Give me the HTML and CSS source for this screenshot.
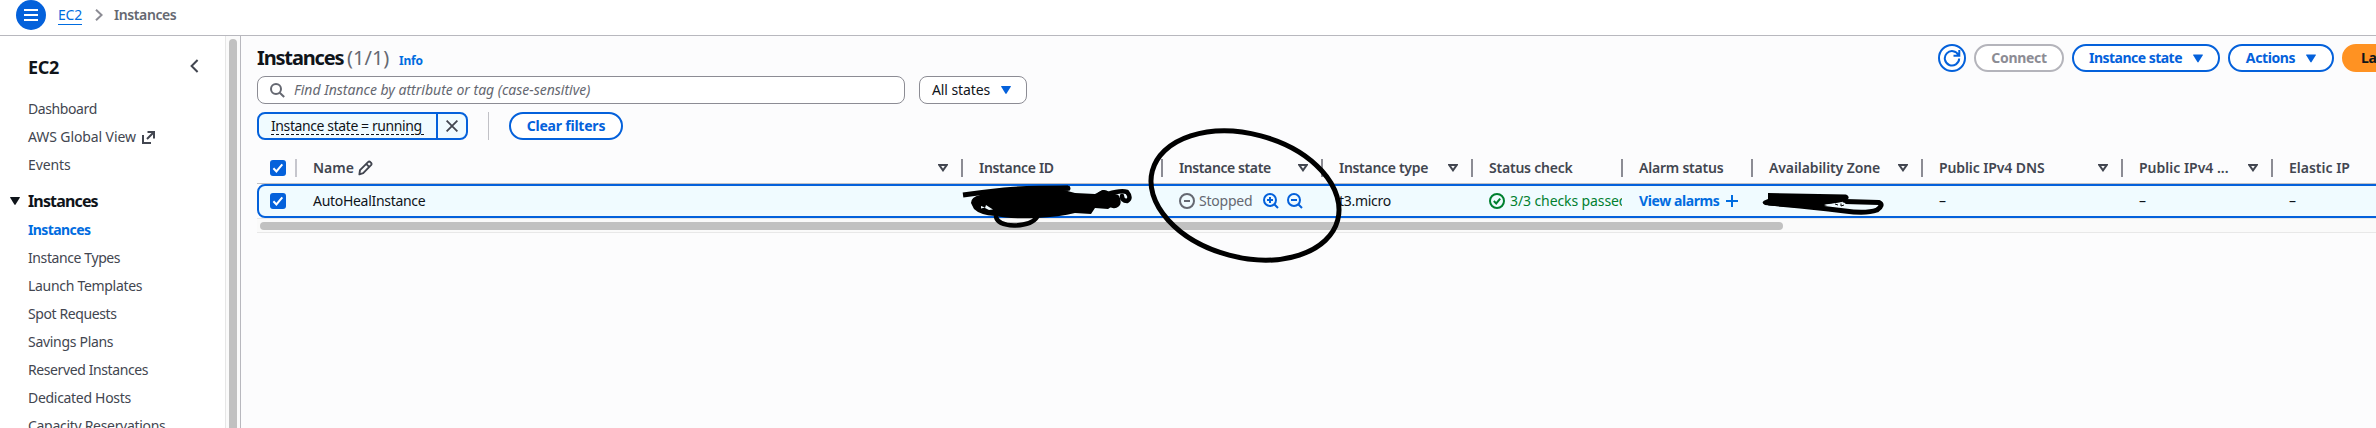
FILE: index.html
```html
<!DOCTYPE html>
<html lang="en">
<head>
<meta charset="utf-8">
<title>Instances | EC2</title>
<link rel="stylesheet" href="styles.css">
</head>
<body>
<svg class="defs" width="0" height="0" aria-hidden="true">
  <symbol id="filter" viewBox="0 0 10 8"><path d="M1.3 1h7.4L5 6.3z" fill="none" stroke="currentColor" stroke-width="2"/></symbol>
  <symbol id="caret" viewBox="0 0 10 8"><path d="M.6 0h8.8q.8 0 .4.7L5.6 7.5q-.6.8-1.2 0L.2.7Q-.2 0 .6 0z" fill="currentColor"/></symbol>
  <symbol id="check" viewBox="0 0 16 16"><path d="M3.4 8.3l3 3.1 5.9-7" fill="none" stroke="#fff" stroke-width="2"/></symbol>
</svg>
<header class="topbar">
  <button class="menu"><svg width="14" height="12" viewBox="0 0 14 12"><path d="M0 1h14M0 6h14M0 11h14" stroke="#fff" stroke-width="2"/></svg></button>
  <a class="crumb-link t2">EC2</a>
  <svg class="crumb-sep" width="8" height="12" viewBox="0 0 8 12"><path d="M1 .8L6.6 6 1 11.2" fill="none" stroke="#8c8c94" stroke-width="2"/></svg>
  <span class="crumb t4">Instances</span>
</header>
<div class="layout">
  <nav class="side">
    <div class="side-head"><h2 class="t3">EC2</h2><svg width="9" height="14" viewBox="0 0 9 14"><path d="M7.6 1L1.6 7l6 6" fill="none" stroke="#424650" stroke-width="2"/></svg></div>
    <ul class="links">
      <li class="t4">Dashboard</li>
      <li class="t1">AWS Global View <svg class="ext" width="13" height="13" viewBox="0 0 13 13"><path d="M5.5 1H12v6.500M12 1L5 8M1 4v8h8" fill="none" stroke="#424650" stroke-width="2"/></svg></li>
      <li class="t1">Events</li>
    </ul>
    <h3 class="group"><svg width="10" height="8"><use href="#caret"/></svg><span>Instances</span></h3>
    <ul class="links">
      <li class="active t6">Instances</li>
      <li class="t4">Instance Types</li>
      <li class="t3">Launch Templates</li>
      <li class="t4">Spot Requests</li>
      <li class="t3">Savings Plans</li>
      <li class="t4">Reserved Instances</li>
      <li class="t3">Dedicated Hosts</li>
      <li class="t3">Capacity Reservations</li>
    </ul>
  </nav>
  <div class="vscroll"><div class="vthumb"></div></div>
  <main class="main">
    <div class="title-row">
      <h1>Instances</h1><span class="count">(1/1)</span><a class="info">Info</a>
      <div class="actions">
        <button class="btn round"><svg width="18" height="18" viewBox="0 0 18 18"><path d="M15.500 6.200A7.200 7.200 0 1 0 16.200 9.500M16.300 1v5.800h-5.800" fill="none" stroke="currentColor" stroke-width="2"/></svg></button>
        <button class="btn disabled w-connect t3">Connect</button>
        <button class="btn w-state"><span class="t5">Instance state</span><svg width="10" height="9"><use href="#caret"/></svg></button>
        <button class="btn w-actions"><span class="t4">Actions</span><svg width="10" height="9"><use href="#caret"/></svg></button>
        <button class="btn primary t3">Launch instances</button>
      </div>
    </div>
    <div class="filter-row">
      <div class="search"><svg width="15" height="15" viewBox="0 0 15 15"><circle cx="6" cy="6" r="5" fill="none" stroke="#656871" stroke-width="2"/><path d="M9.700 9.700l4.500 4.300" stroke="#656871" stroke-width="2"/></svg><span>Find Instance by attribute or tag (case-sensitive)</span></div>
      <div class="select"><span class="t1">All states</span><svg width="10" height="8"><use href="#caret"/></svg></div>
    </div>
    <div class="token-row">
      <div class="token"><span class="token-text"><span class="t4">Instance state = running</span></span><span class="token-x"><svg width="12" height="12" viewBox="0 0 12 12"><path d="M.6.6l10.800 10.800M11.400.6L.6 11.400" stroke="#424650" stroke-width="1.800"/></svg></span></div>
      <div class="vline"></div>
      <button class="btn w-clear t2">Clear filters</button>
    </div>
    <div class="table">
      <div class="grid thead">
        <div class="cell sel"><span class="box"><svg width="16" height="16"><use href="#check"/></svg></span></div>
        <div class="cell">Name<svg class="pencil" width="15" height="16" viewBox="0 0 15 16"><path d="M1.400 14.400L2 10.200 10 2.200Q11.200 1 12.500 2.200Q14.300 3.700 13 5.200L5.200 13.200zM8.400 4.200l3 3" fill="none" stroke="#424650" stroke-width="1.900" stroke-linejoin="round"/></svg><svg class="flt" width="10" height="8"><use href="#filter"/></svg></div>
        <div class="cell t3">Instance ID</div>
        <div class="cell t4">Instance state<svg class="flt" width="10" height="8"><use href="#filter"/></svg></div>
        <div class="cell t3">Instance type<svg class="flt" width="10" height="8"><use href="#filter"/></svg></div>
        <div class="cell t2">Status check</div>
        <div class="cell t2">Alarm status</div>
        <div class="cell t1">Availability Zone<svg class="flt" width="10" height="8"><use href="#filter"/></svg></div>
        <div class="cell t1">Public IPv4 DNS<svg class="flt" width="10" height="8"><use href="#filter"/></svg></div>
        <div class="cell">Public IPv4 ...<svg class="flt" width="10" height="8"><use href="#filter"/></svg></div>
        <div class="cell">Elastic IP</div>
      </div>
      <div class="grid row">
        <div class="cell sel"><span class="box"><svg width="16" height="16"><use href="#check"/></svg></span></div>
        <div class="cell t3">AutoHealInstance</div>
        <div class="cell"></div>
        <div class="cell stopped"><svg width="16" height="16" viewBox="0 0 16 16"><circle cx="8" cy="8" r="7" fill="none" stroke="currentColor" stroke-width="2"/><path d="M5 8h6" stroke="currentColor" stroke-width="2"/></svg><span class="t2">Stopped</span>
          <svg class="zoom zin" width="16" height="16" viewBox="0 0 16 16"><path d="M7 4v6M4 7h6M11 11l4 4" stroke="currentColor" stroke-width="2"/><circle cx="7" cy="7" r="6" fill="none" stroke="currentColor" stroke-width="2"/></svg>
          <svg class="zoom zout" width="16" height="16" viewBox="0 0 16 16"><path d="M4 7h6M11 11l4 4" stroke="currentColor" stroke-width="2"/><circle cx="7" cy="7" r="6" fill="none" stroke="currentColor" stroke-width="2"/></svg></div>
        <div class="cell t3">t3.micro</div>
        <div class="cell passed"><svg width="16" height="16" viewBox="0 0 16 16"><circle cx="8" cy="8" r="7" fill="none" stroke="currentColor" stroke-width="2"/><path d="M4.800 8l2.400 2.400 4-4.800" fill="none" stroke="currentColor" stroke-width="2"/></svg><span class="t1">3/3 checks passed</span></div>
        <div class="cell alarms"><span class="t3">View alarms</span><svg width="12" height="12" viewBox="0 0 12 12"><path d="M6 0v12M0 6h12" stroke="currentColor" stroke-width="2"/></svg></div>
        <div class="cell"></div>
        <div class="cell">–</div>
        <div class="cell">–</div>
        <div class="cell">–</div>
      </div>
      <div class="hscroll"><div class="hthumb"></div></div>
    </div>
  </main>
</div>
<svg class="ink" width="2376" height="428" viewBox="0 0 2376 428">
  <ellipse cx="1245" cy="195.500" rx="95.900" ry="61.700" transform="rotate(14.900 1245 195.500)" fill="none" stroke="#000" stroke-width="5"/>
  <g fill="none" stroke="#000" stroke-width="5" stroke-linejoin="round" stroke-linecap="round">
    <path d="M963 195Q985 192 1004 190T1068 188" stroke-linecap="butt"/>
    <path d="M1060 188.500L1068 188.300"/>
    <path d="M996 217Q998 225 1014 225.500Q1032 225 1037 217" stroke-width="4.500"/>
    <path d="M1098 196Q1103 190 1108 194Q1121 190 1127 192Q1132 198 1127 201Q1122 201 1122 196M1117 197Q1121 205 1114 206Q1108 205 1112 202" stroke-width="4.500"/>
    <path d="M1769 203L1800 206Q1830 209 1845 211Q1866 214 1877 210Q1884 205 1879 202.500L1845 201.500"/>
  </g>
  <path d="M971 203Q971 197 980 195L1005 188 1060 189 1075 193 1095 194 1103 190 1118 195 1117 203 1108 209 1095 208 1091 214 1075 213Q1060 217 1036 218 1010 219 995 216 980 215 974 209z"/>
  <path d="M1768 193L1846 194.500Q1850 196 1848 199L1842 202Q1830 204 1824 206L1805 208 1775 206 1765 205Q1759 202 1768 199z"/>
  <path d="M981 206l4 1.500-4 1zM986 205l3 2 4 2.500-4 .5-4-2z" fill="#f0fbff"/>
  <path d="M1824 204.500L1844 202.500 1849 206.500 1836 207z" fill="#f0fbff"/>
  <path d="M1835 204l3 1M1841 203.500v2.500l3-1" fill="none" stroke="#000"/>
</svg>
</body>
</html>
```
FILE: styles.css
```css
* { box-sizing: border-box; }
body { margin: 0; width: 2376px; height: 428px; overflow: hidden; position: relative; background: #fff; color: #0f141a; font: 450 14px/20px "Noto Sans", sans-serif; white-space: nowrap; display: flex; flex-direction: column; }
svg { display: block; flex: none; }
.defs { position: absolute; }
h1, h2, h3, ul { margin: 0; padding: 0; list-style: none; }
button { font: inherit; padding: 0; }
.t1 { letter-spacing: -.1px; }
.t2 { letter-spacing: -.22px; }
.t3 { letter-spacing: -.3px; }
.t4 { letter-spacing: -.4px; }
.t5 { letter-spacing: -.52px; }
.t6 { letter-spacing: -.6px; }

.topbar { height: 36px; flex: none; border-bottom: 1px solid #b8b8be; display: flex; align-items: flex-start; padding-left: 16px; }
.menu { width: 30px; height: 30px; border: 0; border-radius: 50%; background: #0461db; display: flex; align-items: center; justify-content: center; }
.crumb-link { margin: 5px 0 0 12px; width: 24px; height: 20px; color: #006ce0; border-bottom: 1px solid #006ce0; }
.crumb-sep { margin: 9px 0 0 13px; }
.crumb { margin: 5px 0 0 11px; font-weight: 600; color: #656871; }

.layout { display: flex; flex: 1; min-height: 0; }
.side { width: 225px; flex: none; overflow: hidden; color: #424650; }
.side-head { display: flex; justify-content: space-between; padding: 19px 26px 0 28px; height: 59px; }
.side-head svg { margin-top: 4px; }
h2 { font-size: 18px; line-height: 24px; color: #0f141a; }
.links { padding-left: 28px; }
.links li { height: 28px; line-height: 28px; display: flex; align-items: center; }
.ext { margin-left: 6px; }
.links .active { color: #006ce0; font-weight: 700; }
.group { display: flex; align-items: center; gap: 8px; padding: 7px 0 0 10px; height: 37px; font-size: 16px; line-height: 24px; color: #0f141a; letter-spacing: -.85px; }
.vscroll { width: 16px; flex: none; overflow: hidden; background: #fafafa; border-left: 1px solid #e6e6e6; border-right: 1px solid #b8b8be; padding: 3px 3px 0; }
.vthumb { height: 100%; width: 8px; border-radius: 4px 4px 0 0; background: #c1c1c1; }

.main { flex: 1; min-width: 0; background: #fcfcfd; padding: 8px 0 0 16px; overflow: hidden; }
.title-row { display: flex; height: 32px; align-items: flex-start; }
.title-row > * { flex: none; }
h1 { font-size: 20px; line-height: 28px; letter-spacing: -1.150px; width: 90px; }
.count { font-size: 20px; line-height: 28px; color: #656871; width: 52px; }
.info { font-size: 12px; line-height: 16px; margin-top: 9px; width: 24px; font-weight: 700; color: #006ce0; letter-spacing: -.2px; }
.actions { margin-left: 1515px; display: flex; gap: 8px; }
.btn { height: 28px; flex: none; border: 2px solid #0461db; border-radius: 14px; background: #fff; color: #0461db; font-weight: 700; display: flex; align-items: center; justify-content: center; }
.round { width: 28px; }
.disabled { border-color: #b4b4bb; color: #8c8c94; }
.w-connect { width: 90px; }
.w-state { width: 148px; gap: 11px; }
.w-actions { width: 106px; gap: 11px; }
.primary { background: #ff9222; border-color: #ff9222; color: #0f141a; padding: 0 17px; }
.w-clear { width: 114px; }

.filter-row { display: flex; gap: 14px; height: 28px; }
.search, .select { height: 28px; border: 1px solid #8c8c94; border-radius: 8px; background: #fff; display: flex; align-items: center; }
.search { width: 648px; padding-left: 12px; gap: 9px; font-style: italic; color: #656871; }
.select { width: 108px; padding: 0 15px 0 12px; justify-content: space-between; }
.select svg { color: #0461db; }
.token-row { display: flex; height: 28px; margin-top: 8px; }
.token { width: 211px; border: 2px solid #0461db; border-radius: 8px; background: #f0fbff; display: flex; }
.token-text { width: 179px; padding: 2px 0 0 12px; border-right: 2px solid #0461db; }
.token-text span { display: block; width: 153px; height: 19px; line-height: 20px; border-bottom: 1px dashed #0f141a; }
.token-x { flex: 1; display: flex; align-items: center; justify-content: center; }
.vline { width: 1px; margin: 0 20px; background: #c1c1c6; }

.table { margin-top: 9px; width: 2240px; }
.grid { display: grid; grid-template-columns: 39px 666px 200px 160px 150px 150px 130px 170px 200px 150px 225px; }
.cell { display: flex; align-items: center; padding-left: 17px; min-width: 0; overflow: hidden; }
.thead { height: 35px; font-weight: 600; color: #424650; border-bottom: 1px solid #c0c0c5; }
.thead .cell { height: 18px; margin: 10px -1px 0 0; border-right: 2px solid #8c8c94; overflow: visible; }
.thead .sel { border-right-color: #c6c6cd; }
.thead .cell:last-child { border: 0; }
.thead .sel, .row .sel { padding-left: 13px; }
.box { width: 16px; height: 16px; border-radius: 3px; background: #0461db; }
.flt { margin-left: auto; margin-right: 13px; }
.pencil { margin-left: 4px; }
.row { height: 34px; border: 2px solid #0461db; border-radius: 8px; background: #f0fbff; }
.row .cell { margin-left: -2px; height: 30px; }
.stopped { color: #656871; }
.stopped span { margin-left: 4px; width: 54px; }
.zoom { color: #0461db; }
.zin { margin-left: 10px; }
.zout { margin-left: 8px; }
.passed { color: #00802f; gap: 5px; }
.passed span { width: 112px; overflow: hidden; }
.alarms { color: #006ce0; font-weight: 700; }
.alarms span { width: 87px; letter-spacing: -.4px; }
.hscroll { height: 15px; background: #fafafa; border-top: 1px solid #e8e8e8; border-bottom: 1px solid #e8e8e8; padding: 3px 0 0 3px; }
.hthumb { width: 1523px; height: 8px; border-radius: 4px; background: #c1c1c1; }
.ink { position: absolute; left: 0; top: 0; pointer-events: none; }
```
